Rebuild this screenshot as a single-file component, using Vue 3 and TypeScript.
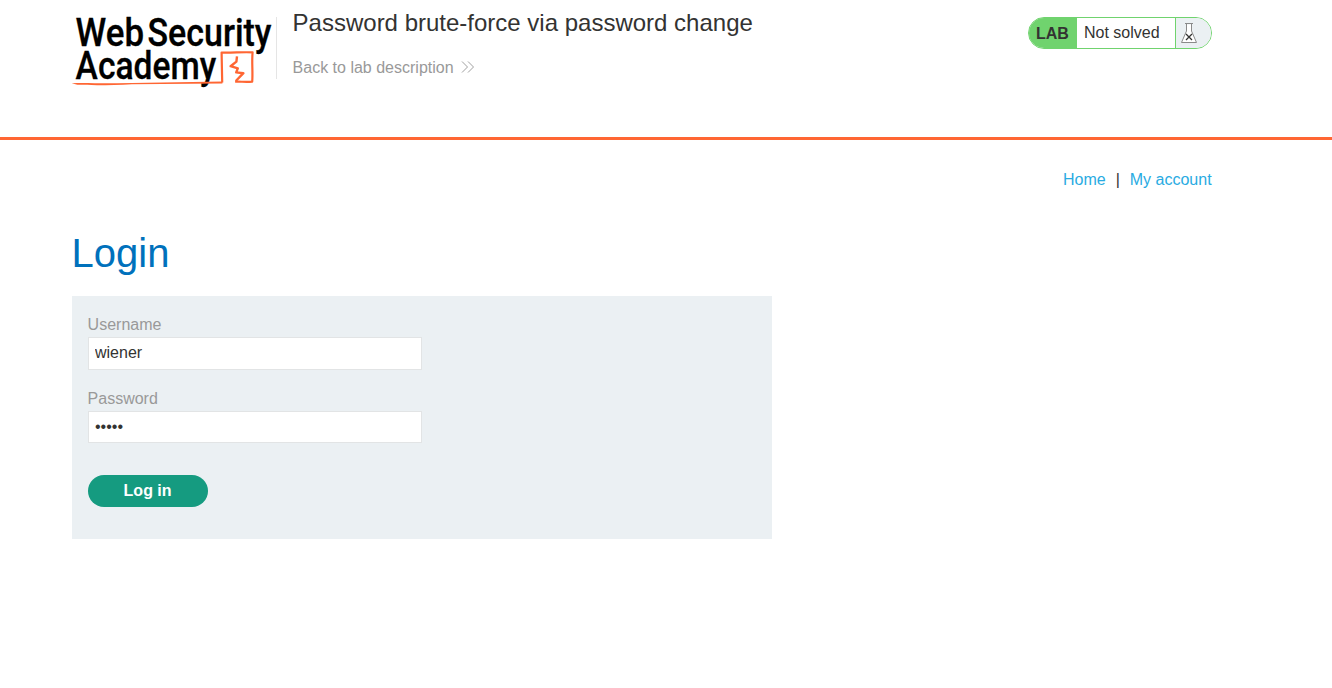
<script setup lang="ts">
import { ref } from 'vue'

const username = ref<string>('wiener')
const password = ref<string>('peter')
</script>

<template>
  <div class="page">
    <header class="lab-header">
      <div class="container header-row">
        <svg class="logo" width="204" height="80" viewBox="0 0 204 80" aria-label="Web Security Academy">
          <g class="logo-text">
            <text x="3.6" y="37.6" textLength="68.5" lengthAdjust="spacingAndGlyphs">Web</text>
            <text x="75.5" y="37.6" textLength="124" lengthAdjust="spacingAndGlyphs">Security</text>
            <text x="3.6" y="70.6" textLength="140.6" lengthAdjust="spacingAndGlyphs">Academy</text>
          </g>
          <path d="M-0.4 75.2C14 74.6 28 75.6 45 75.2L150.4 73.4V75.4L60 76.2C40 77.4 18 77.4 5.4 76.8Z" fill="#ff6633" />
          <path d="M150.2 74.4L149.6 44.6C160 45 171 43.8 180.6 44.4C179.6 54 181 64 180.2 73.6C174 74.2 168 73.4 163.1 73.7" fill="none" stroke="#ff6633" stroke-width="2.2" stroke-linejoin="round" />
          <path d="M165 48.4L164.4 53.6L158.6 58.2L165.8 60.4L164.2 64.4L171.4 65.2L163.8 73" fill="none" stroke="#ff6633" stroke-width="2.4" stroke-linejoin="round" />
        </svg>
        <div class="title-block">
          <h2>Password brute-force via password change</h2>
          <a class="back" href="#">
            <span>Back to lab description</span>
            <svg width="14" height="14" viewBox="0 0 14 14">
              <path d="M1 0.5L6.5 6L1 11.5M7 0.5L12.5 6L7 11.5" fill="none" stroke="#a0a0a0" stroke-width="1" />
            </svg>
          </a>
        </div>
        <div class="status">
          <span class="lab">LAB</span>
          <p>Not solved</p>
          <span class="flask">
            <svg width="18" height="22" viewBox="0 0 18 22">
              <path d="M6.5 1.5V8L1.5 19.5H16.5L11.5 8V1.5Z" fill="#fff" />
              <path d="M5 0.5H13M6.5 1V8L1.5 19.5H16.5L11.5 8V1" fill="none" stroke="#8a8a8a" stroke-width="1" />
              <path d="M6 11L12 17M12 11L6 17" stroke="#333332" stroke-width="1.3" />
            </svg>
          </span>
        </div>
      </div>
    </header>

    <main class="container">
      <nav>
        <a href="#">Home</a><span>|</span><a href="#">My account</a>
      </nav>
      <h1>Login</h1>
      <form @submit.prevent>
        <label for="username">Username</label>
        <input id="username" v-model="username" type="text" />
        <label for="password">Password</label>
        <input id="password" v-model="password" type="password" />
        <button type="submit">Log in</button>
      </form>
    </main>
  </div>
</template>

<style scoped>
.page {
  min-height: 688px;
  background: #fff;
  color: #333332;
  font: 16px/20px "Liberation Sans", Arial, sans-serif;
}
a {
  color: #29abe2;
  text-decoration: none;
}
.container {
  width: 1140px;
  margin-left: 71.6px;
}
.lab-header {
  box-sizing: border-box;
  height: 140px;
  border-bottom: 3px solid #ff6633;
}
.header-row {
  display: flex;
  align-items: flex-start;
}
.logo {
  display: block;
  flex: none;
  margin-top: 8px;
  overflow: visible;
}
.logo-text {
  font-family: Roboto, sans-serif;
  font-size: 38px;
  font-weight: 500;
  fill: #000;
  stroke: #000;
  stroke-width: 0.3px;
}
.title-block {
  box-sizing: border-box;
  height: 62px;
  margin-top: 17px;
  padding-left: 16px;
  border-left: 1px solid #e5e5e5;
}
h2 {
  margin: -9px 0 0;
  font-size: 24px;
  line-height: 30px;
  font-weight: 400;
  white-space: nowrap;
}
.back {
  display: flex;
  align-items: center;
  margin-top: 20px;
  gap: 7px;
  color: #999;
}
.status {
  display: flex;
  box-sizing: border-box;
  width: 184px;
  height: 32px;
  margin: 17px 0 0 auto;
  border: 1px solid #70d36e;
  border-radius: 16px;
  overflow: hidden;
  line-height: 30px;
}
.lab {
  width: 48px;
  padding-left: 7.4px;
  box-sizing: border-box;
  background: #70d36e;
  font-weight: 700;
  line-height: 31px;
}
.status p {
  flex: 1;
  margin: 0;
  padding-left: 7.4px;
}
.flask {
  display: flex;
  align-items: center;
  box-sizing: border-box;
  width: 36px;
  padding: 1px 0 0 4px;
  border-left: 1px solid #70d36e;
  background: #ebf0f3;
}
nav {
  display: flex;
  justify-content: flex-end;
  gap: 10px;
  padding-top: 30px;
}
h1 {
  margin: 38px 0 0;
  color: #0071bc;
  font-size: 40px;
  line-height: 50px;
  font-weight: 400;
}
form {
  display: flex;
  flex-direction: column;
  align-items: flex-start;
  box-sizing: border-box;
  width: 700px;
  height: 243px;
  margin-top: 18px;
  padding: 19px 16px;
  background: #ebf0f3;
}
label {
  height: 22px;
  color: #999;
}
input {
  box-sizing: border-box;
  width: 334px;
  height: 33px;
  margin: 0 0 19px;
  padding: 0 6.4px 2px;
  border: 1px solid #e2e4e5;
  border-radius: 0;
  outline: none;
  background: #fff;
  color: #333332;
  font: inherit;
}
#password {
  height: 32px;
  margin-bottom: 32px;
  padding-bottom: 0;
}
button {
  width: 120px;
  height: 32px;
  padding: 0;
  border: 0;
  border-radius: 16px;
  background: #159b80;
  color: #fff;
  font: inherit;
  font-weight: 700;
}
</style>
